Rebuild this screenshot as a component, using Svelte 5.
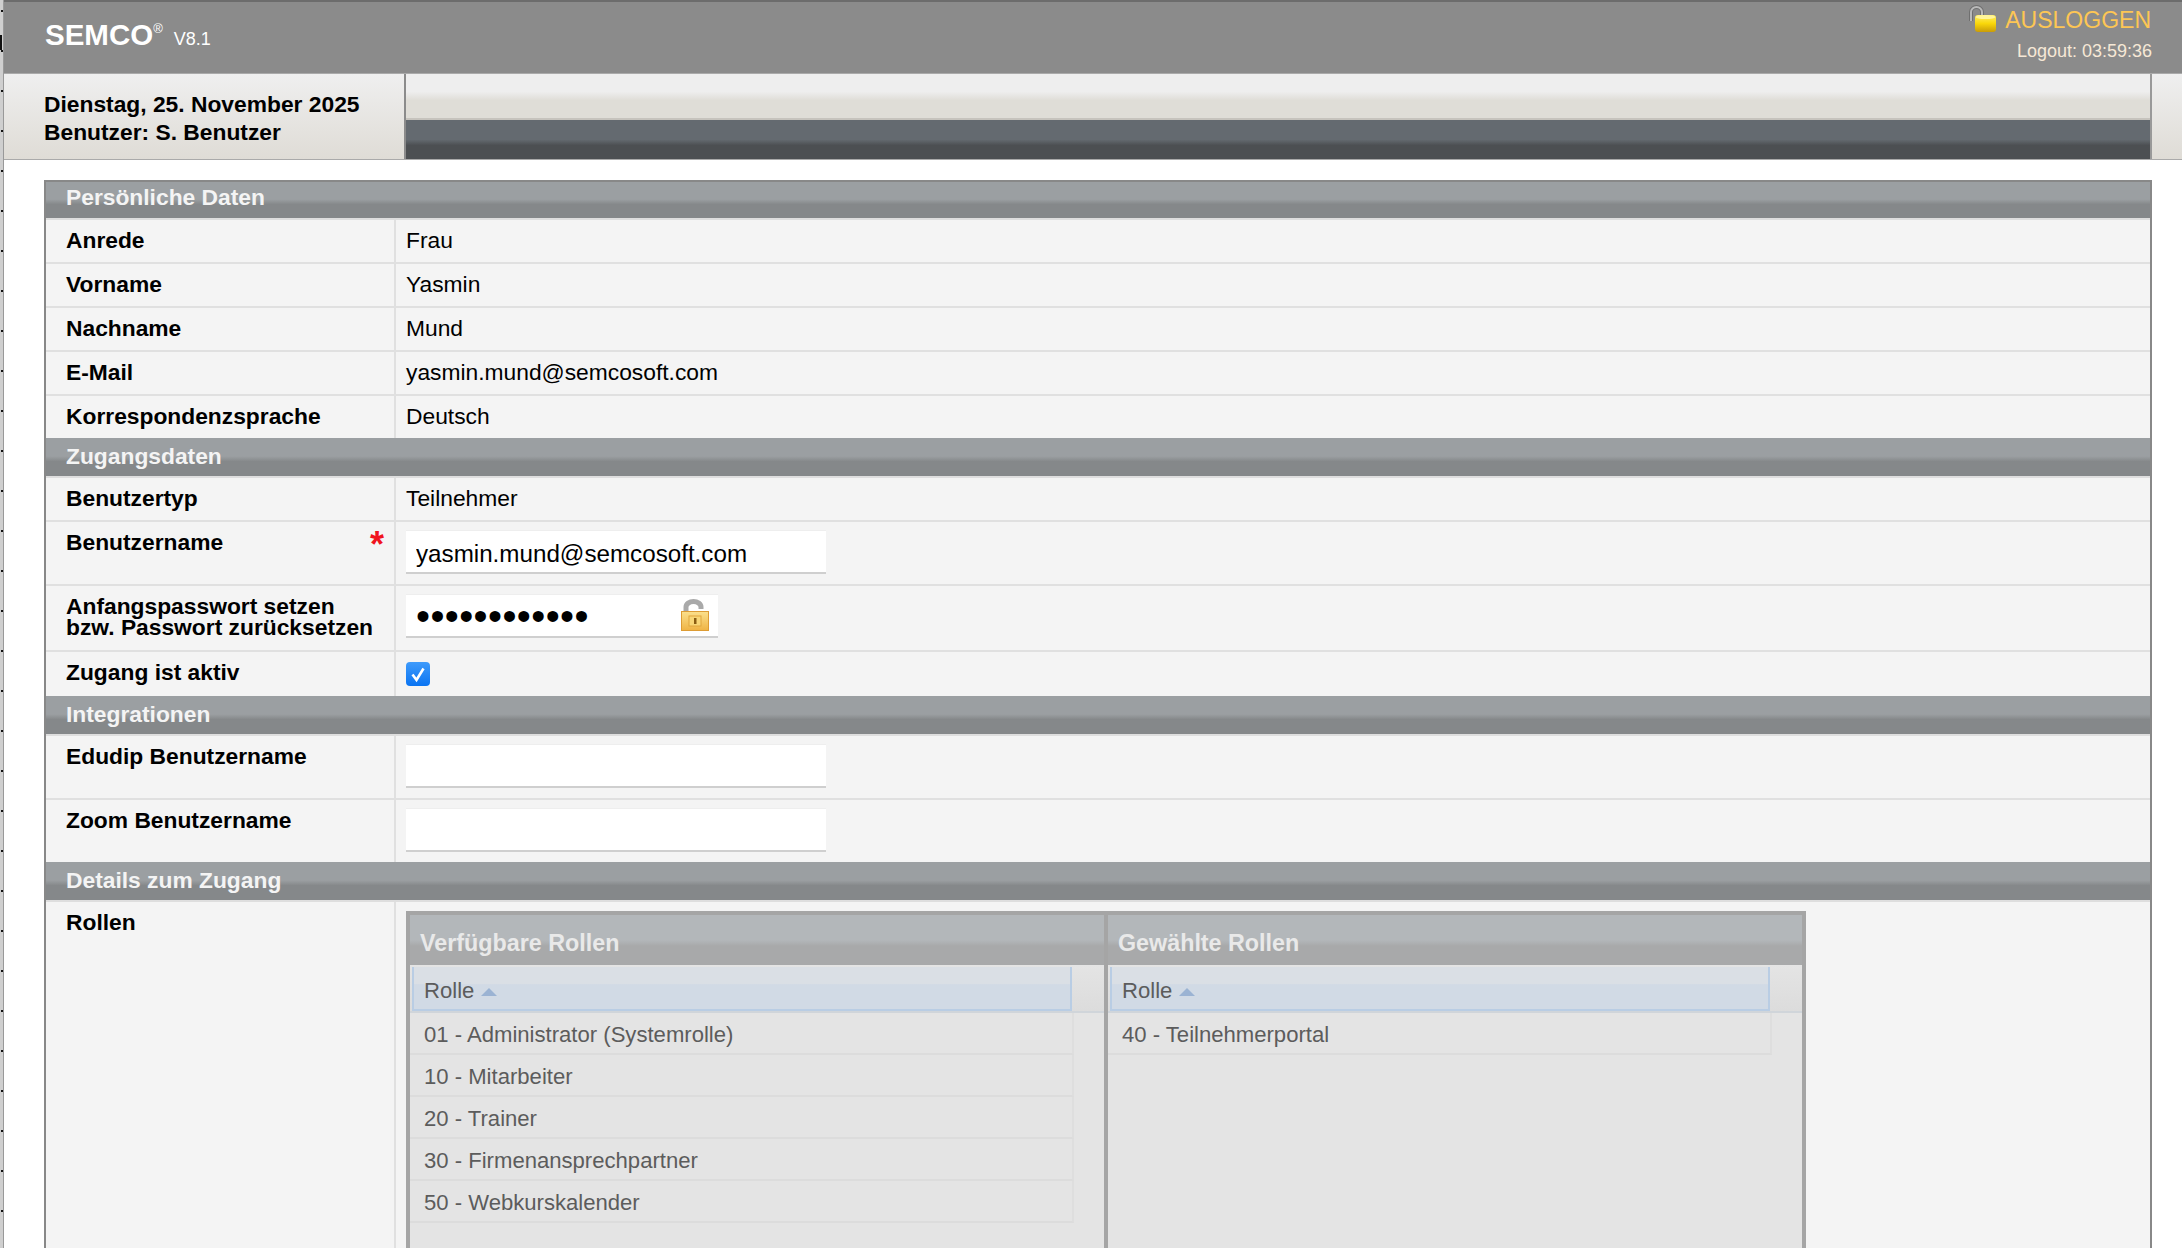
<script>
	const sections = [
		{
			title: 'Persönliche Daten',
			rows: [
				{ label: 'Anrede', value: 'Frau' },
				{ label: 'Vorname', value: 'Yasmin' },
				{ label: 'Nachname', value: 'Mund' },
				{ label: 'E-Mail', value: 'yasmin.mund@semcosoft.com' },
				{ label: 'Korrespondenzsprache', value: 'Deutsch' }
			]
		}
	];
	const available = [
		'01 - Administrator (Systemrolle)',
		'10 - Mitarbeiter',
		'20 - Trainer',
		'30 - Firmenansprechpartner',
		'50 - Webkurskalender'
	];
	const selected = ['40 - Teilnehmerportal'];
	const lists = [
		{ title: 'Verfügbare Rollen', items: available },
		{ title: 'Gewählte Rollen', items: selected }
	];
</script>

<div class="page">
	<div class="strip"></div>
	<div class="main">
		<header class="top">
			<div class="brand">
				<span class="logo">SEMCO<sup>®</sup></span>
				<span class="version">V8.1</span>
			</div>
			<div class="session">
				<div class="logout">
					<svg class="lock-open" viewBox="0 0 30 30" width="30" height="30" aria-hidden="true">
						<defs>
							<linearGradient id="body-gold" x1="0" x2="0" y1="0" y2="1">
								<stop offset="0" stop-color="#fff06a" />
								<stop offset="0.5" stop-color="#f9d70a" />
								<stop offset="1" stop-color="#c99c08" />
							</linearGradient>
						</defs>
						<path d="M3 16 V7 a5.5 5 0 0 1 11 0 V11" fill="none" stroke="#6f6f6f" stroke-width="4" />
						<path d="M3 16 V7 a5.5 5 0 0 1 11 0 V11" fill="none" stroke="#b9b9b9" stroke-width="2" />
						<rect x="7" y="10" width="21" height="17" rx="3" fill="url(#body-gold)" />
						<ellipse cx="17.5" cy="12" rx="10" ry="2" fill="#fff59a" />
					</svg>
					<span>AUSLOGGEN</span>
				</div>
				<div class="timer">Logout: 03:59:36</div>
			</div>
		</header>

		<div class="subhead">
			<div class="today">
				<div>Dienstag, 25. November 2025</div>
				<div>Benutzer: S. Benutzer</div>
			</div>
			<div class="bars">
				<div class="bar-light"></div>
				<div class="bar-dark"></div>
			</div>
			<div class="corner"></div>
		</div>

		<div class="form">
			{#each sections as section}
				<div class="section">{section.title}</div>
				{#each section.rows as row, i}
					<div class="row" class:last={i === section.rows.length - 1}>
						<div class="label">{row.label}</div>
						<div class="value">{row.value}</div>
					</div>
				{/each}
			{/each}

			<div class="section">Zugangsdaten</div>
			<div class="row">
				<div class="label">Benutzertyp</div>
				<div class="value">Teilnehmer</div>
			</div>
			<div class="row tall">
				<div class="label">Benutzername<span class="req">*</span></div>
				<div class="value"><input class="field" type="text" value="yasmin.mund@semcosoft.com" /></div>
			</div>
			<div class="row tall pw">
				<div class="label two">Anfangspasswort setzen<br />bzw. Passwort zurücksetzen</div>
				<div class="value">
					<div class="pw-wrap">
						<input class="field short" type="password" value="abcdefghijkl" />
						<svg class="lock-key" viewBox="0 0 28 32" width="28" height="32" aria-hidden="true">
							<defs>
								<linearGradient id="key-gold" x1="0" x2="0" y1="0" y2="1">
									<stop offset="0" stop-color="#fbe08c" />
									<stop offset="1" stop-color="#efb344" />
								</linearGradient>
							</defs>
							<path d="M5 13 V8 a7.5 5.5 0 0 1 15 0 V10" fill="none" stroke="#a9a9a9" stroke-width="5" />
							<rect x="0.5" y="12.5" width="27" height="19" fill="url(#key-gold)" stroke="#dd9c34" />
							<rect x="8" y="17" width="12" height="10" fill="#f8d677" stroke="#e0a63e" />
							<rect x="13" y="19" width="2.5" height="6" fill="#8a5d12" />
						</svg>
					</div>
				</div>
			</div>
			<div class="row last-active">
				<div class="label">Zugang ist aktiv</div>
				<div class="value">
					<span class="check" role="checkbox" aria-checked="true" aria-label="Zugang ist aktiv" tabindex="0">
						<svg viewBox="0 0 24 24" width="24" height="24" aria-hidden="true">
							<path d="M6.5 12.5 L10.5 18 L17.5 6.5" fill="none" stroke="#fff" stroke-width="2.6" />
						</svg>
					</span>
				</div>
			</div>

			<div class="section">Integrationen</div>
			<div class="row tall">
				<div class="label">Edudip Benutzername</div>
				<div class="value"><input class="field" type="text" /></div>
			</div>
			<div class="row tall last-zoom">
				<div class="label">Zoom Benutzername</div>
				<div class="value"><input class="field" type="text" /></div>
			</div>

			<div class="section">Details zum Zugang</div>
			<div class="row roles-row">
				<div class="label">Rollen</div>
				<div class="value">
					<div class="roles">
						{#each lists as list}
							<div class="role-col">
								<div class="role-title">{list.title}</div>
								<div class="role-head">
									<div class="role-cell">Rolle <span class="sort"></span></div>
								</div>
								{#each list.items as item}
									<div class="role-item">{item}</div>
								{/each}
							</div>
						{/each}
					</div>
				</div>
			</div>
		</div>
	</div>
</div>

<style>
	:global(body) {
		margin: 0;
		background: #fff;
	}
	.page {
		display: flex;
		height: 100vh;
		overflow: hidden;
		font-family: 'Liberation Sans', Arial, sans-serif;
		font-size: 22.8px;
		color: #000;
	}
	.strip {
		flex: 0 0 4px;
		box-sizing: border-box;
		border-right: 1px solid #999;
		background:
			linear-gradient(#111, #111) 0 35px / 2px 15px no-repeat,
			repeating-linear-gradient(to bottom, transparent 0, transparent 10px, #111 10px, #111 12px, transparent 12px, transparent 40px) 1px 0 / 2px 100% no-repeat,
			#cfcfcf;
	}
	.main {
		flex: 1;
		min-width: 0;
	}

	.top {
		height: 74px;
		box-sizing: border-box;
		display: flex;
		justify-content: space-between;
		border-top: 2px solid #6c6c6c;
		border-bottom: 1px solid #aaa;
		background: #8b8b8b;
		color: #fff;
		padding-left: 41px;
	}
	.brand {
		padding-top: 16px;
		display: flex;
		align-items: baseline;
		gap: 11px;
	}
	.logo {
		font-size: 29.5px;
		font-weight: bold;
		line-height: 34px;
	}
	.logo sup {
		font-size: 13px;
		font-weight: normal;
		vertical-align: 12px;
		line-height: 0;
	}
	.version {
		font-size: 18px;
	}
	.session {
		padding: 3px 30px 0 0;
		text-align: right;
	}
	.logout {
		display: flex;
		align-items: center;
		justify-content: flex-end;
		gap: 7px;
		color: #fdc654;
		font-size: 23px;
		height: 30px;
		padding-right: 1px;
	}
	.timer {
		margin-top: 6px;
		font-size: 18px;
		color: #f6e8d6;
	}

	.subhead {
		display: flex;
		height: 86px;
		border-bottom: 1px solid #aaa;
		box-sizing: border-box;
	}
	.today {
		flex: 0 0 400px;
		box-sizing: border-box;
		padding: 16px 0 0 40px;
		font-size: 22.8px;
		font-weight: bold;
		line-height: 28px;
		background: linear-gradient(#efefef, #dfdcd6);
	}
	.bars {
		flex: 1;
		display: flex;
		flex-direction: column;
		border-left: 2px solid #8b8b8b;
		border-right: 2px solid #999;
	}
	.bar-light {
		height: 46px;
		box-sizing: border-box;
		border-bottom: 2px solid #c6c3bd;
		background: linear-gradient(#eeeeee 0, #eeeeee 40%, #dfddd7 60%, #dfddd7 100%);
	}
	.bar-dark {
		flex: 1;
		background: linear-gradient(#646a70 0, #646a70 50%, #4c4f52 65%, #4c4f52 100%);
	}
	.corner {
		flex: 0 0 30px;
		background: linear-gradient(#efefef, #dfdcd6);
	}

	.form {
		margin: 20px 30px 0 40px;
		border: solid #888;
		border-width: 0 2px;
	}
	.section {
		height: 40px;
		box-sizing: border-box;
		border-bottom: 2px solid #dedede;
		padding-left: 20px;
		font-size: 22.8px;
		font-weight: bold;
		line-height: 36px;
		color: #f4f4f4;
		background: linear-gradient(#9b9fa2 0, #9b9fa2 48%, #85888a 62%, #85888a 100%);
	}
	.section:first-child {
		border-top: 2px solid #888;
		line-height: 31px;
	}
	.row {
		display: grid;
		grid-template-columns: 350px 1fr;
		min-height: 44px;
		box-sizing: border-box;
		border-bottom: 2px solid #e0e0e0;
		background: #f4f4f4;
		line-height: 40px;
	}
	.row.last {
		min-height: 42px;
		border-bottom: 0;
	}
	.row.tall {
		height: 64px;
	}
	.row.pw {
		height: 66px;
	}
	.row.last-active {
		border-bottom: 0;
	}
	.row.last-zoom {
		height: 62px;
		border-bottom: 0;
	}
	.label {
		position: relative;
		padding-left: 20px;
		font-weight: bold;
		border-right: 2px solid #e0e0e0;
	}
	.label.two {
		padding-top: 10px;
		line-height: 21px;
	}
	.req {
		position: absolute;
		right: 10px;
		top: 3px;
		color: #f0141e;
		font-size: 36px;
		font-weight: bold;
	}
	.value {
		padding-left: 10px;
		min-width: 0;
	}
	.field {
		display: block;
		box-sizing: border-box;
		margin: 8px 0 0;
		width: 420px;
		height: 44px;
		padding: 4px 10px 0;
		border: 0;
		border-top: 1px solid #eee;
		border-bottom: 2px solid #cfcfcf;
		background: #fff;
		font-family: inherit;
		font-size: 24.2px;
		color: #000;
		outline: none;
	}
	.field.short {
		width: 312px;
		font-size: 40px;
		letter-spacing: 0.4px;
		padding-top: 2px;
	}
	.pw-wrap {
		position: relative;
		width: 312px;
	}
	.lock-key {
		position: absolute;
		right: 9px;
		top: 5px;
	}
	.check {
		display: inline-block;
		width: 24px;
		height: 24px;
		margin-top: 10px;
		border-radius: 4px;
		background: linear-gradient(#3f9bfb, #0a74f2);
		line-height: 0;
		vertical-align: top;
	}

	.roles-row {
		height: 400px;
		border-bottom: 0;
	}
	.roles {
		display: flex;
		width: 1400px;
		margin-top: 9px;
		box-sizing: border-box;
		height: 600px;
		border: 4px solid #a5a5a5;
		gap: 4px;
		background-image: linear-gradient(#a5a5a5, #a5a5a5);
		background-size: 4px 100%;
		background-position: center;
		background-repeat: no-repeat;
		background-color: #e4e4e4;
	}
	.role-col {
		flex: 1;
		min-width: 0;
		color: #5c5c5c;
		font-size: 22.1px;
		line-height: 43px;
	}
	.role-title {
		height: 50px;
		box-sizing: border-box;
		padding: 8px 0 0 10px;
		font-weight: bold;
		font-size: 23.3px;
		line-height: 40px;
		color: #e9e9e9;
		background: linear-gradient(#b3b7ba 0, #b3b7ba 50%, #a8a9aa 62%, #a8a9aa 100%);
	}
	.role-head {
		height: 48px;
		box-sizing: border-box;
		padding: 2px 32px 0 2px;
		border-bottom: 2px solid #d0d5da;
		background: linear-gradient(#e4e4e4, #dcdcdc);
	}
	.role-cell {
		height: 44px;
		box-sizing: border-box;
		padding-left: 10px;
		line-height: 47px;
		border: solid #b9cde4;
		border-width: 0 2px 2px 2px;
		background: linear-gradient(#dadfe5 0, #dadfe5 40%, #d1dae5 42%, #d1dae5 100%);
	}
	.sort {
		display: inline-block;
		margin-left: 0;
		vertical-align: 2px;
		border: solid transparent;
		border-width: 0 8px 8px 8px;
		border-bottom-color: #9bb3d3;
	}
	.role-item {
		width: 664px;
		height: 42px;
		box-sizing: border-box;
		padding-left: 14px;
		border-bottom: 2px solid #dcdcdc;
		border-right: 2px solid #dedede;
	}
</style>
